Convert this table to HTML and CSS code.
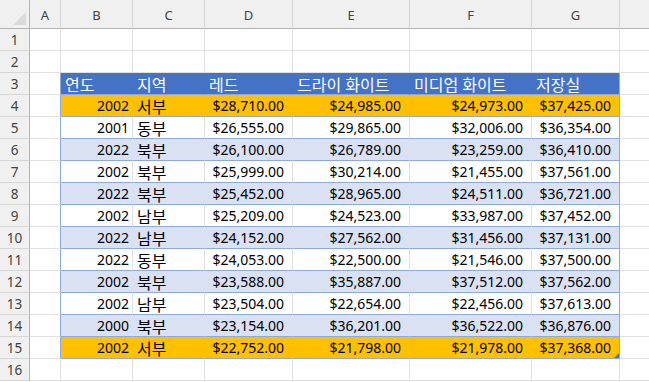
FILE: index.html
```html
<!DOCTYPE html>
<html lang="ko">
<head>
  <meta charset="UTF-8" />
  <title>연도별 판매</title>
  <link rel="stylesheet" href="styles.css">
</head>
<body>
  <div class="sheet">
    <div class="row col-heads">
      <div class="cell corner"><span class="corner-mark"></span></div>
      <div class="cell">A</div><div class="cell">B</div><div class="cell">C</div><div class="cell">D</div>
      <div class="cell">E</div><div class="cell">F</div><div class="cell">G</div><div class="cell"></div>
    </div>
    <div class="row">
      <div class="cell rh">1</div>
      <div class="cell"></div><div class="cell"></div><div class="cell"></div><div class="cell"></div>
      <div class="cell"></div><div class="cell"></div><div class="cell"></div><div class="cell"></div>
    </div>
    <div class="row">
      <div class="cell rh">2</div>
      <div class="cell"></div><div class="cell"></div><div class="cell"></div><div class="cell"></div>
      <div class="cell"></div><div class="cell"></div><div class="cell"></div><div class="cell"></div>
    </div>
    <div class="row t-head">
      <div class="cell rh">3</div>
      <div class="cell edge"></div>
      <div class="cell tc">연도</div><div class="cell tc">지역</div><div class="cell tc">레드</div>
      <div class="cell tc">드라이 화이트</div><div class="cell tc">미디엄 화이트</div><div class="cell tc last">저장실</div>
      <div class="cell"></div>
    </div>
    <div class="row t-row hi">
      <div class="cell rh">4</div><div class="cell edge"></div>
      <div class="cell tc num">2002</div><div class="cell tc">서부</div><div class="cell tc cur">$28,710.00</div>
      <div class="cell tc cur">$24,985.00</div><div class="cell tc cur">$24,973.00</div><div class="cell tc cur last">$37,425.00</div>
      <div class="cell"></div>
    </div>
    <div class="row t-row">
      <div class="cell rh">5</div><div class="cell edge"></div>
      <div class="cell tc num">2001</div><div class="cell tc">동부</div><div class="cell tc cur">$26,555.00</div>
      <div class="cell tc cur">$29,865.00</div><div class="cell tc cur">$32,006.00</div><div class="cell tc cur last">$36,354.00</div>
      <div class="cell"></div>
    </div>
    <div class="row t-row band">
      <div class="cell rh">6</div><div class="cell edge"></div>
      <div class="cell tc num">2022</div><div class="cell tc">북부</div><div class="cell tc cur">$26,100.00</div>
      <div class="cell tc cur">$26,789.00</div><div class="cell tc cur">$23,259.00</div><div class="cell tc cur last">$36,410.00</div>
      <div class="cell"></div>
    </div>
    <div class="row t-row">
      <div class="cell rh">7</div><div class="cell edge"></div>
      <div class="cell tc num">2002</div><div class="cell tc">북부</div><div class="cell tc cur">$25,999.00</div>
      <div class="cell tc cur">$30,214.00</div><div class="cell tc cur">$21,455.00</div><div class="cell tc cur last">$37,561.00</div>
      <div class="cell"></div>
    </div>
    <div class="row t-row band">
      <div class="cell rh">8</div><div class="cell edge"></div>
      <div class="cell tc num">2022</div><div class="cell tc">북부</div><div class="cell tc cur">$25,452.00</div>
      <div class="cell tc cur">$28,965.00</div><div class="cell tc cur">$24,511.00</div><div class="cell tc cur last">$36,721.00</div>
      <div class="cell"></div>
    </div>
    <div class="row t-row">
      <div class="cell rh">9</div><div class="cell edge"></div>
      <div class="cell tc num">2002</div><div class="cell tc">남부</div><div class="cell tc cur">$25,209.00</div>
      <div class="cell tc cur">$24,523.00</div><div class="cell tc cur">$33,987.00</div><div class="cell tc cur last">$37,452.00</div>
      <div class="cell"></div>
    </div>
    <div class="row t-row band">
      <div class="cell rh">10</div><div class="cell edge"></div>
      <div class="cell tc num">2022</div><div class="cell tc">남부</div><div class="cell tc cur">$24,152.00</div>
      <div class="cell tc cur">$27,562.00</div><div class="cell tc cur">$31,456.00</div><div class="cell tc cur last">$37,131.00</div>
      <div class="cell"></div>
    </div>
    <div class="row t-row">
      <div class="cell rh">11</div><div class="cell edge"></div>
      <div class="cell tc num">2022</div><div class="cell tc">동부</div><div class="cell tc cur">$24,053.00</div>
      <div class="cell tc cur">$22,500.00</div><div class="cell tc cur">$21,546.00</div><div class="cell tc cur last">$37,500.00</div>
      <div class="cell"></div>
    </div>
    <div class="row t-row band">
      <div class="cell rh">12</div><div class="cell edge"></div>
      <div class="cell tc num">2002</div><div class="cell tc">북부</div><div class="cell tc cur">$23,588.00</div>
      <div class="cell tc cur">$35,887.00</div><div class="cell tc cur">$37,512.00</div><div class="cell tc cur last">$37,562.00</div>
      <div class="cell"></div>
    </div>
    <div class="row t-row">
      <div class="cell rh">13</div><div class="cell edge"></div>
      <div class="cell tc num">2002</div><div class="cell tc">남부</div><div class="cell tc cur">$23,504.00</div>
      <div class="cell tc cur">$22,654.00</div><div class="cell tc cur">$22,456.00</div><div class="cell tc cur last">$37,613.00</div>
      <div class="cell"></div>
    </div>
    <div class="row t-row band">
      <div class="cell rh">14</div><div class="cell edge"></div>
      <div class="cell tc num">2000</div><div class="cell tc">북부</div><div class="cell tc cur">$23,154.00</div>
      <div class="cell tc cur">$36,201.00</div><div class="cell tc cur">$36,522.00</div><div class="cell tc cur last">$36,876.00</div>
      <div class="cell"></div>
    </div>
    <div class="row t-row hi">
      <div class="cell rh">15</div><div class="cell edge"></div>
      <div class="cell tc num">2002</div><div class="cell tc">서부</div><div class="cell tc cur">$22,752.00</div>
      <div class="cell tc cur">$21,798.00</div><div class="cell tc cur">$21,978.00</div><div class="cell tc cur last">$37,368.00<span class="resize-handle"></span></div>
      <div class="cell"></div>
    </div>
    <div class="row">
      <div class="cell rh">16</div>
      <div class="cell"></div><div class="cell"></div><div class="cell"></div><div class="cell"></div>
      <div class="cell"></div><div class="cell"></div><div class="cell"></div><div class="cell"></div>
    </div>
  </div>
</body>
</html>
```

FILE: styles.css
```css
* { margin: 0; padding: 0; box-sizing: border-box; }
body {
  font-family: 'Noto Sans', 'Noto Sans CJK KR', sans-serif;
  background: #fff;
  color: #000;
  overflow: hidden;
}
.sheet {
  display: flex;
  flex-direction: column;
}
.row {
  display: grid;
  grid-template-columns: 30px 31px 72px 72px 88px 117px 122px 88px 60px;
  height: 22px;
}
.cell {
  border-right: 1px solid #e1e1e1;
  border-bottom: 1px solid #e1e1e1;
  font-size: 16px;
  line-height: 21px;
  padding: 0 4px;
  white-space: nowrap;
  overflow: hidden;
  position: relative;
}

/* column and row headings */
.col-heads {
  height: 29px;
}
.col-heads .cell {
  background: #f0f0f0;
  border-bottom-color: #b4b4b4;
  border-right-color: #d6d6d6;
  font-size: 13px;
  color: #424242;
  text-align: center;
  line-height: 30px;
}
.col-heads .corner {
  border-right-color: #b4b4b4;
}
.corner-mark {
  position: absolute;
  right: 3px;
  bottom: 3px;
  width: 0;
  height: 0;
  border-left: 13px solid transparent;
  border-bottom: 13px solid #dadada;
}
.rh {
  background: #f0f0f0;
  border-right-color: #b4b4b4;
  border-bottom-color: #d6d6d6;
  color: #424242;
  font-size: 13.5px;
  text-align: center;
  line-height: 22px;
  padding: 0;
}

/* table */
.tc {
  line-height: 25px;
}
.t-head .tc {
  background: #4472c4;
  color: #fff;
  border-right-color: #4472c4;
  border-bottom-color: #8ea9db;
}
.edge {
  border-right-color: #8ea9db;
}
.t-row .tc {
  border-bottom-color: #8ea9db;
}
.t-head .last,
.t-row .last {
  border-right-color: #8ea9db;
}
.band .tc {
  background: #d9e1f2;
  border-right-color: #d9e1f2;
}
.hi .tc {
  background: #ffc000;
  border-right-color: #ffc000;
}
.band .last,
.hi .last {
  border-right-color: #8ea9db;
}
.num {
  font-size: 14px;
  line-height: 21px;
  text-align: right;
  padding-right: 3px;
}
.cur {
  font-size: 14px;
  line-height: 21px;
  text-align: right;
  padding-right: 8px;
}
.resize-handle {
  position: absolute;
  right: 0;
  bottom: 0;
  width: 0;
  height: 0;
  border-left: 5px solid transparent;
  border-bottom: 5px solid #4472c4;
}
```
